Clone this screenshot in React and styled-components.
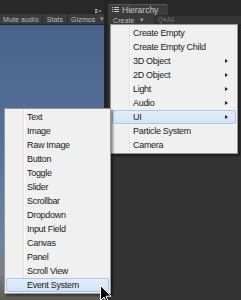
import styled, { createGlobalStyle } from "styled-components"

const GlobalStyle = createGlobalStyle`
    body{
        margin: 0;
        background-color: #2b2b2b;
        font-family: "Liberation Sans", Arial, sans-serif;
    }
`

const mainItems = [
    { name: 'Create Empty' },
    { name: 'Create Empty Child' },
    { name: '3D Object', sub: true },
    { name: '2D Object', sub: true },
    { name: 'Light', sub: true },
    { name: 'Audio', sub: true },
    { name: 'UI', sub: true, active: true },
    { name: 'Particle System' },
    { name: 'Camera' },
]

const uiItems = ['Text', 'Image', 'Raw Image', 'Button', 'Toggle', 'Slider', 'Scrollbar',
    'Dropdown', 'Input Field', 'Canvas', 'Panel', 'Scroll View', 'Event System']

export default function App(){
    return(
        <>
            <GlobalStyle />
            <Tela>
                <Cena>
                    <Faixa>
                        <MenuIcone>
                            <svg width="7" height="4" viewBox="0 0 7 4">
                                <path d="M0 0.5h2.5M0 2h2.5M0 3.5h2.5" stroke="#b5b5b5" strokeWidth="1" />
                                <path d="M3.5 1.5h3l-1.5 2z" fill="#b5b5b5" />
                            </svg>
                        </MenuIcone>
                    </Faixa>
                    <Barra>
                        <BotaoBarra>Mute audio</BotaoBarra>
                        <BotaoBarra>Stats</BotaoBarra>
                        <BotaoBarra>Gizmos <Seta>▾</Seta></BotaoBarra>
                    </Barra>
                    <Ceu />
                </Cena>
                <Divisor />
                <Hierarquia>
                    <Abas>
                        <Aba>
                            <svg width="7" height="6" viewBox="0 0 7 6">
                                <path d="M0 0.5h1M2 0.5h5M0 2.5h1M2 2.5h5M0 4.5h1M2 4.5h5" stroke="#c8c8c8" strokeWidth="1" />
                            </svg>
                            Hierarchy
                        </Aba>
                    </Abas>
                    <Barra>
                        <BotaoBarra sem>Create <Seta>▾</Seta></BotaoBarra>
                        <Busca>Q▾All</Busca>
                    </Barra>
                    <Corpo />
                </Hierarquia>

                <Menu x={110} y={24} largura={128}>
                    {mainItems.map((i)=>
                        <Item key={i.name} ativo={i.active}>
                            {i.name}
                            {i.sub && <Triangulo />}
                        </Item>
                    )}
                </Menu>

                <Menu x={4} y={108} largura={107}>
                    {uiItems.map((nome)=>
                        <Item key={nome} ativo={nome === 'Event System'}>{nome}</Item>
                    )}
                </Menu>

                <Cursor width="12" height="19" viewBox="0 0 12 19">
                    <path d="M0.5 0.5v15l3.5-3.5 2.5 6 2-1-2.5-5.8h5z" fill="#000" stroke="#fff" strokeWidth="1" />
                </Cursor>
            </Tela>
        </>
    )
}

const Tela = styled.div`
    position: relative;
    width: 241px;
    height: 300px;
    overflow: hidden;
    display: grid;
    grid-template-columns: 104px 4px 1fr;
    background-color: #282828;
`
const Cena = styled.div`
    display: flex;
    flex-direction: column;
    min-width: 0;
`
const Faixa = styled.div`
    height: 14px;
    background-color: #282828;
    display: flex;
    justify-content: flex-end;
    align-items: flex-end;
    padding-right: 2px;
    box-sizing: border-box;
`
const MenuIcone = styled.div`
    display: flex;
    margin-bottom: 1px;
`
const Barra = styled.div`
    height: 10px;
    background-color: #3b3b3b;
    display: flex;
    align-items: center;
    border-bottom: 1px solid #252525;
`
const BotaoBarra = styled.div`
    height: 10px;
    display: flex;
    align-items: center;
    padding: 0 ${props => props.sem ? '5px' : '3.5px'};
    font-size: 7px;
    letter-spacing: 0.1px;
    color: #bdbdbd;
    border-right: 1px solid ${props => props.sem ? 'transparent' : '#2c2c2c'};
    white-space: nowrap;
    &:first-child{
        padding-left: ${props => props.sem ? '5px' : '3px'};
    }
`
const Seta = styled.span`
    margin-left: 5px;
    color: #9a9a9a;
    font-size: 7px;
`
const Ceu = styled.div`
    flex: 1;
    background: linear-gradient(180deg, #4a638c 0%, #566f98 40%, #6d83a8 78%, #7c7f86 90%, #5e5b57 100%);
`
const Divisor = styled.div`
    background-color: #232323;
`
const Hierarquia = styled.div`
    display: flex;
    flex-direction: column;
`
const Abas = styled.div`
    height: 15px;
    display: flex;
    align-items: flex-end;
    background-color: #282828;
`
const Aba = styled.div`
    width: 60px;
    height: 11px;
    box-sizing: border-box;
    background-color: #3c3c3c;
    border-top: 1px solid #555;
    border-radius: 2px 2px 0 0;
    display: flex;
    align-items: center;
    gap: 3px;
    padding-left: 4px;
    font-size: 8.5px;
    color: #c8c8c8;
`
const Busca = styled.div`
    flex: 1;
    height: 8px;
    margin-left: 4px;
    border: 1px solid #2a2a2a;
    border-right: none;
    border-radius: 5px 0 0 5px;
    background-color: #353535;
    font-size: 6.5px;
    color: #6f6f6f;
    display: flex;
    align-items: center;
    padding-left: 3px;
`
const Corpo = styled.div`
    flex: 1;
    background-color: #333333;
`
const Menu = styled.div`
    position: absolute;
    left: ${props => props.x}px;
    top: ${props => props.y}px;
    width: ${props => props.largura}px;
    box-sizing: border-box;
    padding: 1px;
    background-color: #f0f0f0;
    border: 1px solid #979797;
    box-shadow: 2px 2px 2px rgba(0,0,0,0.45);
    background-image: linear-gradient(90deg, transparent 18px, #e2e3e3 18px, #e2e3e3 19px, #ffffff 19px, #ffffff 20px, transparent 20px);
    display: flex;
    flex-direction: column;
`
const Item = styled.div`
    position: relative;
    height: 14px;
    box-sizing: border-box;
    display: flex;
    align-items: center;
    padding-left: 20px;
    font-size: 9px;
    letter-spacing: -0.3px;
    color: #1a1a1a;
    border: 1px solid ${props => props.ativo ? '#a9c7ea' : 'transparent'};
    border-radius: 2px;
    background: ${props => props.ativo ? 'linear-gradient(180deg, #e3edf9, #d3e3f5)' : 'transparent'};
`
const Triangulo = styled.span`
    position: absolute;
    right: 7px;
    top: 4px;
    border-left: 3px solid #222;
    border-top: 2.5px solid transparent;
    border-bottom: 2.5px solid transparent;
`
const Cursor = styled.svg`
    position: absolute;
    left: 100px;
    top: 285px;
`
